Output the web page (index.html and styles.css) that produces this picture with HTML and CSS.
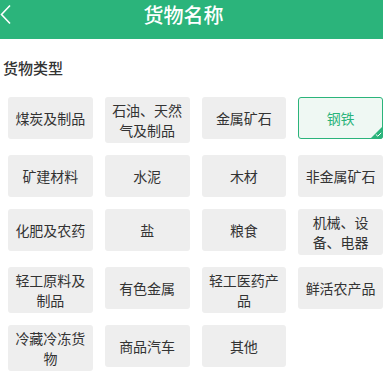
FILE: index.html
```html
<!DOCTYPE html>
<html lang="zh-CN">

<head>
    <meta charset="UTF-8">
    <meta name="viewport" content="width=device-width, initial-scale=1.0">
    <title>货物名称</title>
    <link rel="stylesheet" href="styles.css">
</head>

<body>
    <div class="header">
        <span class="back">
            <svg width="12" height="22" viewBox="0 0 12 22">
                <polyline points="10,1.5 1.5,10.5 10,19.5" fill="none" stroke="#fff" stroke-width="1.6" />
            </svg>
        </span>
        <h1 class="title">货物名称</h1>
    </div>
    <div class="section-label">货物类型</div>
    <div class="type-grid">
        <div class="type-item">煤炭及制品</div>
        <div class="type-item">石油、天然气及制品</div>
        <div class="type-item">金属矿石</div>
        <div class="type-item selected">钢铁
            <span class="check">
                <svg width="7" height="5" viewBox="0 0 7 5">
                    <polyline points="0.8,2.4 2.8,4.2 6.2,0.8" fill="none" stroke="#fff" stroke-width="1" />
                </svg>
            </span>
        </div>
        <div class="type-item">矿建材料</div>
        <div class="type-item">水泥</div>
        <div class="type-item">木材</div>
        <div class="type-item">非金属矿石</div>
        <div class="type-item">化肥及农药</div>
        <div class="type-item">盐</div>
        <div class="type-item">粮食</div>
        <div class="type-item">机械、设备、电器</div>
        <div class="type-item">轻工原料及制品</div>
        <div class="type-item">有色金属</div>
        <div class="type-item">轻工医药产品</div>
        <div class="type-item">鲜活农产品</div>
        <div class="type-item">冷藏冷冻货物</div>
        <div class="type-item">商品汽车</div>
        <div class="type-item">其他</div>
    </div>
</body>

</html>
```

FILE: styles.css
```css
:root {
    --green: #2bb47b;
    --tile-bg: #eeeeee;
    --text: #333;
}

body {
    margin: 0;
    background-color: #fff;
    font-family: "Noto Sans CJK SC", "Noto Sans", sans-serif;
    color: var(--text);
}

.header {
    position: relative;
    height: 39px;
    background-color: var(--green);
    display: flex;
    justify-content: center;
}

.back {
    position: absolute;
    left: 0;
    top: 4px;
}

.title {
    margin: 0;
    margin-top: 3px;
    margin-right: 16px;
    font-size: 20px;
    line-height: 24px;
    font-weight: 500;
    color: #fff;
}

.section-label {
    padding: 18px 0 0 3px;
    font-size: 15px;
    line-height: 22px;
    font-weight: 500;
}

.type-grid {
    display: grid;
    grid-template-columns: repeat(4, 1fr);
    align-items: start;
    column-gap: 12px;
    row-gap: 12px;
    margin-top: 18px;
    padding-left: 8px;
}

.type-item {
    position: relative;
    box-sizing: border-box;
    min-height: 42px;
    padding: 2px 4px;
    display: flex;
    align-items: center;
    justify-content: center;
    text-align: center;
    font-size: 14px;
    line-height: 20px;
    background-color: var(--tile-bg);
    border: 1px solid transparent;
    border-radius: 3px;
}

.selected {
    background-color: #eff8f3;
    border-color: var(--green);
    color: var(--green);
}

.check {
    position: absolute;
    right: -1px;
    bottom: -1px;
    width: 0;
    height: 0;
    border-style: solid;
    border-width: 0 0 13px 13px;
    border-color: transparent transparent var(--green) transparent;
    border-bottom-right-radius: 3px;
}

.check svg {
    position: absolute;
    left: -8px;
    top: 6px;
}
```
